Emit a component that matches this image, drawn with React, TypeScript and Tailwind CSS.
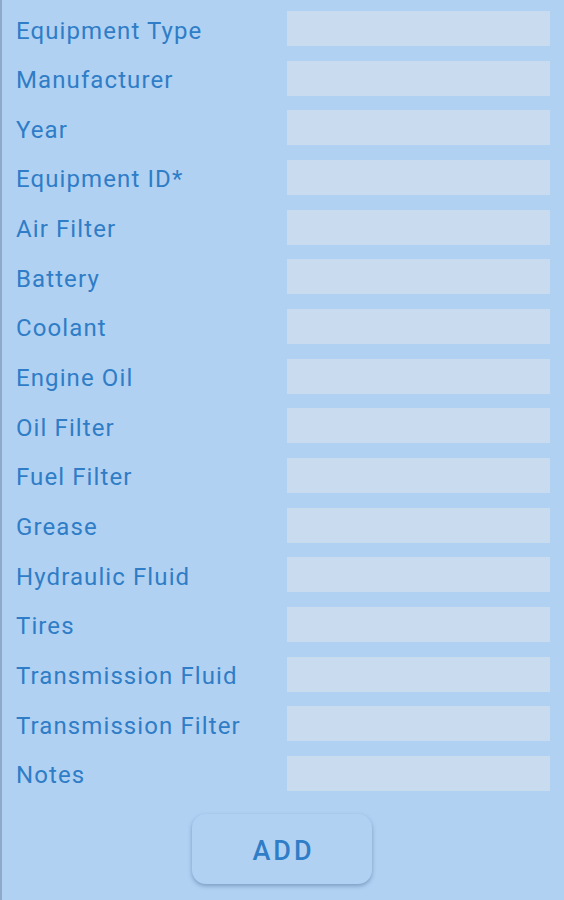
import React from "react";

const fields = [
  "Equipment Type",
  "Manufacturer",
  "Year",
  "Equipment ID*",
  "Air Filter",
  "Battery",
  "Coolant",
  "Engine Oil",
  "Oil Filter",
  "Fuel Filter",
  "Grease",
  "Hydraulic Fluid",
  "Tires",
  "Transmission Fluid",
  "Transmission Filter",
  "Notes",
];

export default function App() {
  return (
    <div
      className="w-[564px] h-[900px] bg-[#b1d1f3] border-l-2 border-[#8ea9c9] overflow-hidden"
      style={{ fontFamily: "Roboto, 'Noto Sans', sans-serif" }}
    >
      <div className="pt-[11px] pl-[14px] pr-[14px] flex flex-col gap-[14.67px]">
        {fields.map((f) => (
          <div key={f} className="flex items-center h-[35px]">
            <div className="w-[271px] text-[24px] leading-none text-[#2f7dc6] tracking-[1.1px] pt-[4px]">
              {f}
            </div>
            <div className="flex-1 h-[35px] bg-[#c9dbee]" />
          </div>
        ))}
      </div>
      <div className="flex justify-center mt-[23px]">
        <button className="w-[180px] h-[70px] ml-[-2px] rounded-[14px] bg-[#b1d1f3] shadow-[0_2px_4px_rgba(60,90,130,0.45)] text-[#2f7dc6] text-[27px] leading-none font-medium tracking-[3px] pl-[3px] pt-[5px]">
          ADD
        </button>
      </div>
    </div>
  );
}
